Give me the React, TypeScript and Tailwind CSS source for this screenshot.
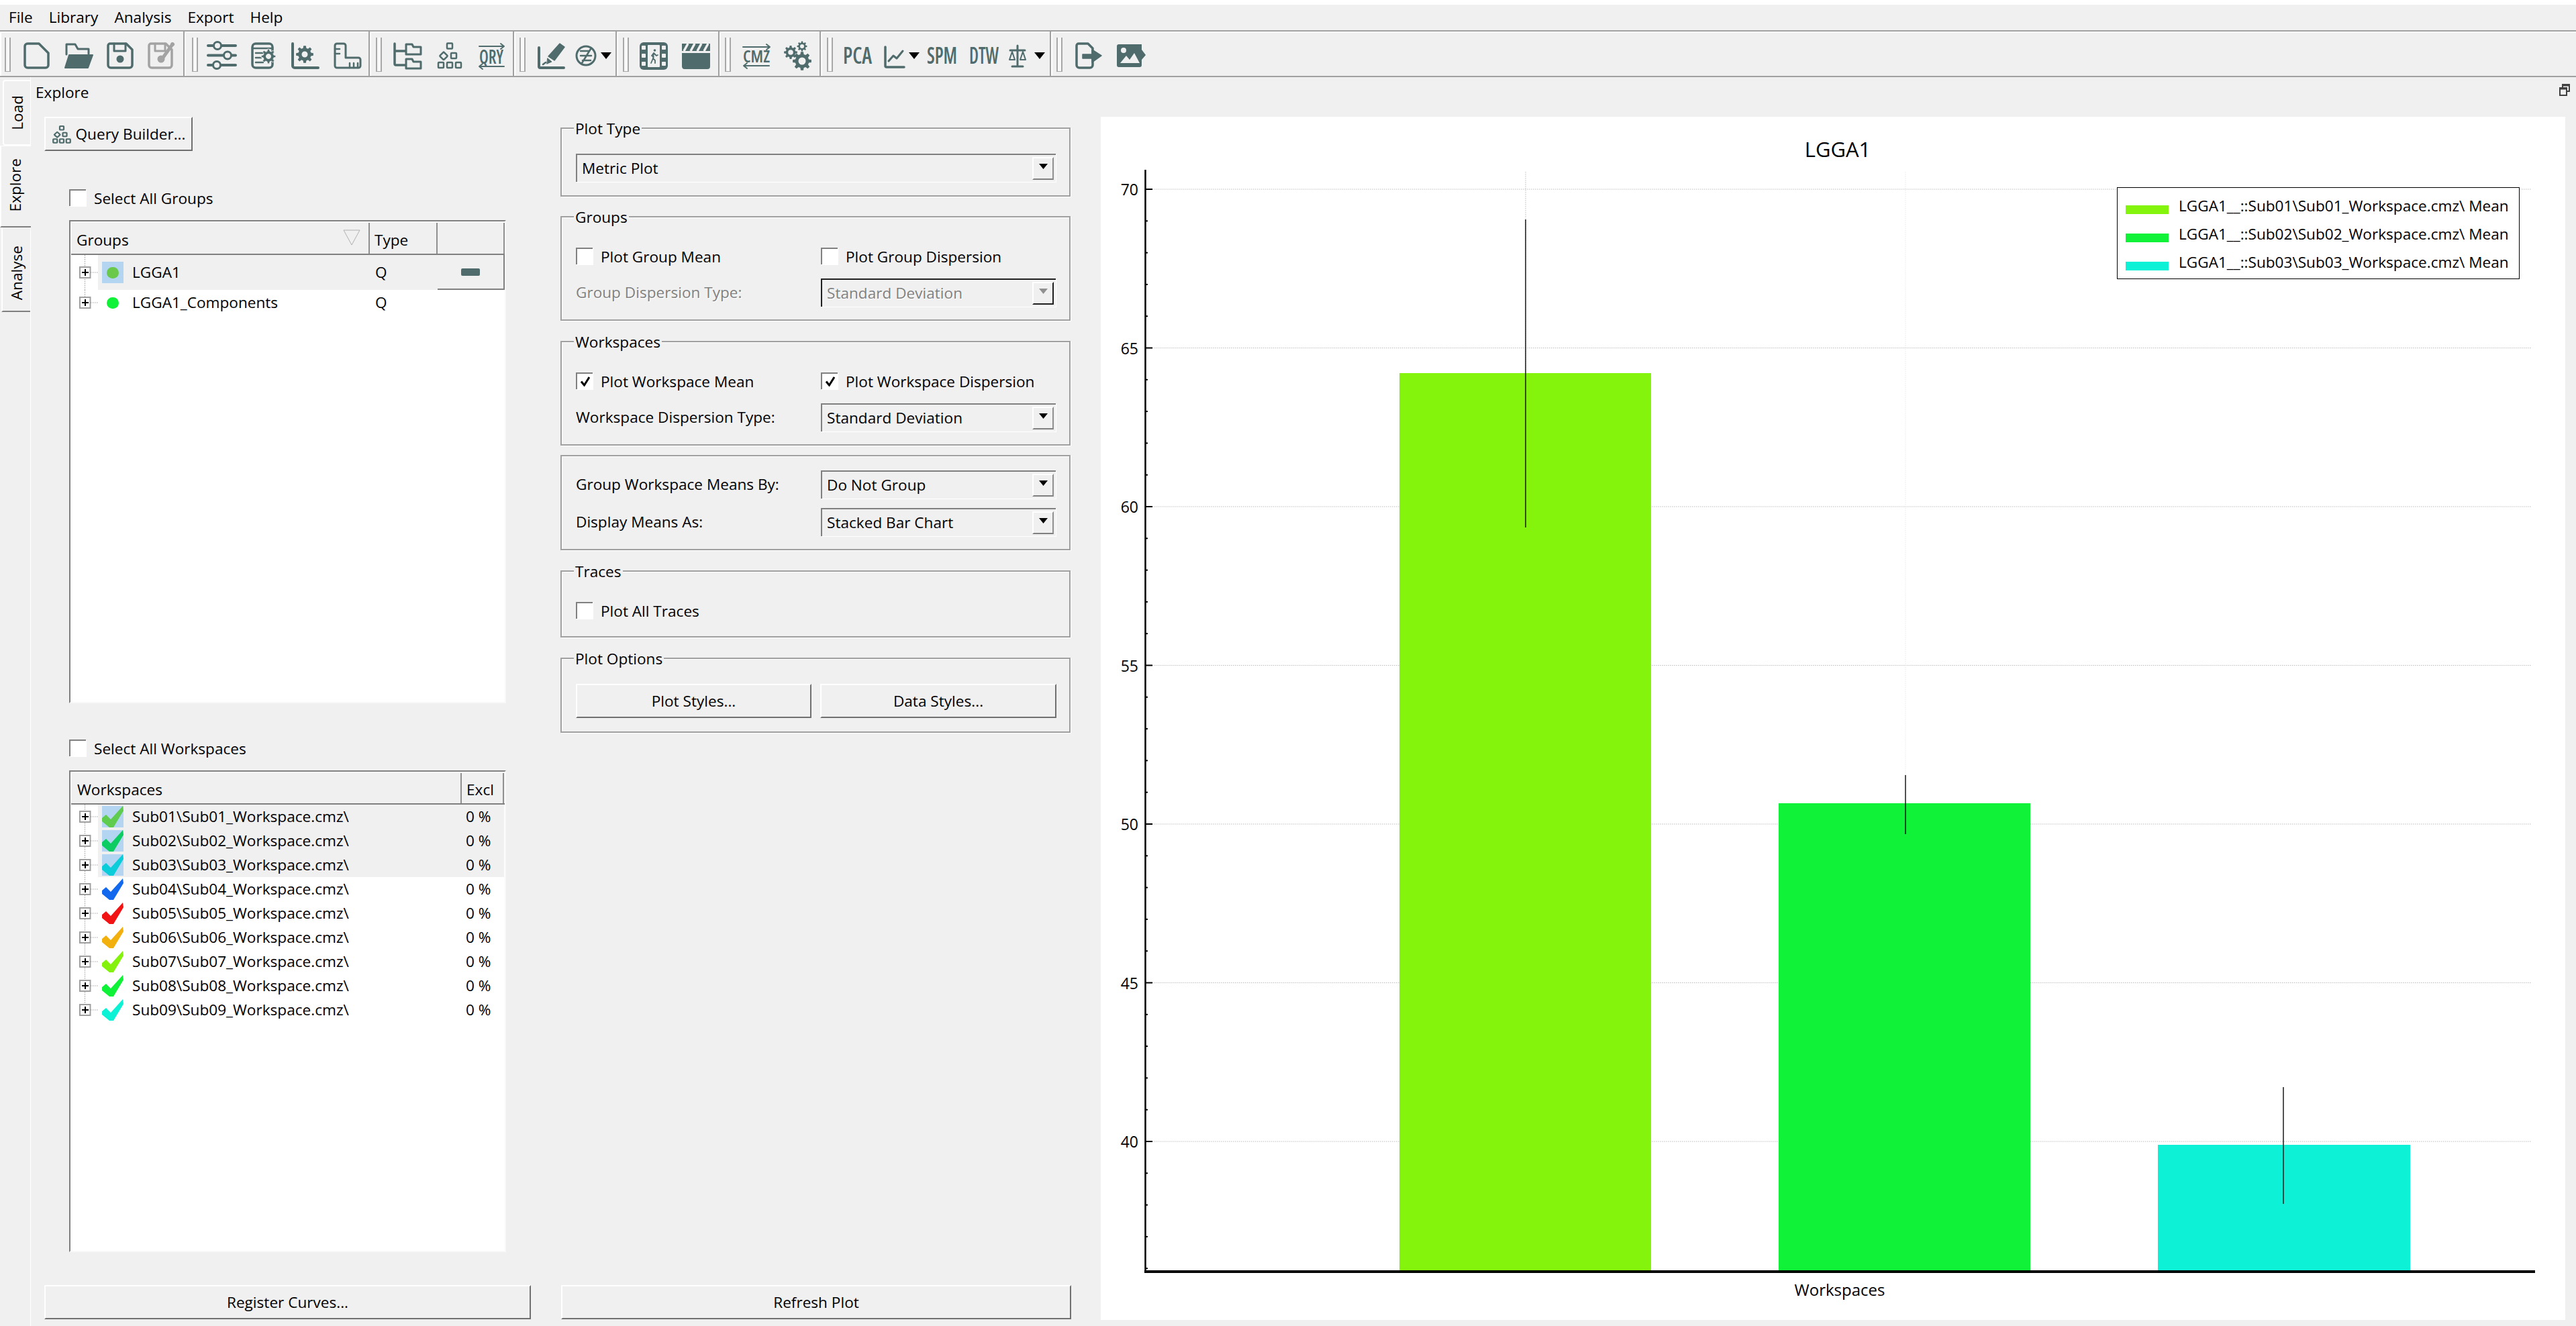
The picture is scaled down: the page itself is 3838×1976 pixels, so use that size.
import React from "react";

const TEAL = "#4f6b6c";

function gearPath(cx: number, cy: number, R: number, hole: number, teeth = 8) {
  const r = R * 0.74;
  const pts: string[] = [];
  const step = (Math.PI * 2) / teeth;
  for (let i = 0; i < teeth; i++) {
    const a = i * step - Math.PI / 2;
    const seq: [number, number][] = [
      [r, a - step * 0.32],
      [R, a - step * 0.18],
      [R, a + step * 0.18],
      [r, a + step * 0.32],
    ];
    for (const [rad, ang] of seq) pts.push(`${(cx + rad * Math.cos(ang)).toFixed(2)} ${(cy + rad * Math.sin(ang)).toFixed(2)}`);
  }
  const h = `M${cx - hole} ${cy}a${hole} ${hole} 0 1 0 ${hole * 2} 0a${hole} ${hole} 0 1 0 ${-hole * 2} 0z`;
  return `M${pts.join("L")}z${h}`;
}

function Ic({ className = "", w = 40, children }: { className?: string; w?: number; children: React.ReactNode }) {
  return (
    <svg
      width={w}
      height={40}
      viewBox={`0 0 ${w} 40`}
      fill="none"
      stroke={TEAL}
      strokeLinecap="round"
      strokeLinejoin="round"
      className={"flex-none overflow-visible mt-[6px] " + className}
    >
      {children}
    </svg>
  );
}

function Label({ t, w, className }: { t: string; w: number; className: string }) {
  return (
    <Ic className={className} w={w}>
      <text x="0" y="32" textLength={w} lengthAdjust="spacingAndGlyphs" fill={TEAL} stroke="none" className="text-[35px] font-semibold [font-stretch:75%]">
        {t}
      </text>
    </Ic>
  );
}

function Handle() {
  return <div className="flex-none w-[9px] h-[51px] mt-[3px] border-x-2 border-b border-[#a8a8a8] bg-[#f8f8f8]" />;
}

function DropArrow({ className = "" }: { className?: string }) {
  return (
    <svg width={16} height={10} viewBox="0 0 16 10" className={"flex-none mt-[6px] " + className}>
      <path d="M0 0H16L8 10z" fill="#000" />
    </svg>
  );
}

const qbShapes = (
  <>
    <rect x="16" y="1.5" width="8" height="8" rx="1" />
    <rect x="7" y="16" width="8.5" height="8.5" rx="1" transform="rotate(45 11 20)" />
    <rect x="22" y="16" width="8" height="8" rx="1" />
    <rect x="3" y="30" width="8" height="8" rx="1" />
    <rect x="16" y="30" width="8" height="8" rx="1" />
    <rect x="29" y="30" width="8" height="8" rx="1" />
  </>
);

function Toolbar() {
  return (
    <div className="flex-none h-[68px] flex border-b-2 border-[#a0a0a0]">
      <div className="flex-none w-[275px] pl-[7px] flex items-center border-r-2 border-[#a0a0a0] shadow-[inset_2px_2px_0_#fff]">
        <Handle />
        <Ic className="ml-[19px]">
          <path d="M6 2h17l14 14v18a4 4 0 0 1-4 4H6a4 4 0 0 1-4-4V6a4 4 0 0 1 4-4z" strokeWidth={3.5} />
        </Ic>
        <Ic className="ml-[23px]">
          <path d="M1 18V3h13l4 7h16v7" strokeWidth={3} />
          <path d="M-1 38L5 19H40L33 38z" fill={TEAL} strokeWidth={2} />
        </Ic>
        <Ic className="ml-[21px]">
          <path d="M5 2h24l9 9v23a4 4 0 0 1-4 4H6a4 4 0 0 1-4-4V5a3 3 0 0 1 3-3z" strokeWidth={3.5} />
          <path d="M11 2v11h17V2" strokeWidth={3} />
          <circle cx="20" cy="25" r="5.5" fill={TEAL} stroke="none" />
        </Ic>
        <Ic className="ml-[21px]">
          <g stroke="#a3a3a3">
            <path d="M5 2h22l9 9v23a4 4 0 0 1-4 4H6a4 4 0 0 1-4-4V5a3 3 0 0 1 3-3z" strokeWidth={3.5} />
            <path d="M11 2v11h15V2" strokeWidth={3} />
            <circle cx="20" cy="25" r="5.5" fill="#a3a3a3" stroke="none" />
            <path d="M37 3L22 24" strokeWidth={5} />
            <circle cx="37" cy="3" r="2.6" fill="#a3a3a3" />
          </g>
        </Ic>
      </div>

      <div className="flex-none w-[276px] pl-[11px] flex items-center border-r-2 border-[#a0a0a0] shadow-[inset_2px_2px_0_#fff]">
        <Handle />
        <Ic className="ml-[15px]">
          <path d="M0 5H41M0 19.5H41M0 34H41" strokeWidth={4} />
          <circle cx="14" cy="5" r="5.5" fill="#f0f0f0" strokeWidth={3} />
          <circle cx="29" cy="19.5" r="5.5" fill="#f0f0f0" strokeWidth={3} />
          <circle cx="13" cy="34" r="5.5" fill="#f0f0f0" strokeWidth={3} />
        </Ic>
        <Ic className="ml-[22px]">
          <rect x="4" y="2" width="30" height="36" rx="5" strokeWidth={3.5} />
          <path d="M4 9H34M9 16H20M9 23H17M9 30H20" strokeWidth={2.5} />
          <path d={gearPath(28, 21, 11, 3.5, 8)} fill={TEAL} fillRule="evenodd" stroke="#f0f0f0" strokeWidth={1} />
        </Ic>
        <Ic className="ml-[21px]">
          <path d="M3 2V35a3 3 0 0 0 3 3H41" strokeWidth={4} />
          <path d={gearPath(21, 18, 13, 4.5, 8)} fill={TEAL} fillRule="evenodd" stroke="none" />
        </Ic>
        <Ic className="ml-[24px]" w={42}>
          <path d="M5 2h10a3 3 0 0 1 3 3v18h19a3 3 0 0 1 3 3v9a3 3 0 0 1-3 3H5a3 3 0 0 1-3-3V5a3 3 0 0 1 3-3z" strokeWidth={3} />
          <path d="M2 10H9M2 17H9M24 38V31M30 38V31M36 38V31" strokeWidth={2.5} />
        </Ic>
      </div>

      <div className="flex-none w-[215px] pl-[9px] flex items-center border-r-2 border-[#a0a0a0] shadow-[inset_2px_2px_0_#fff]">
        <Handle />
        <Ic className="ml-[17px]" w={42}>
          <path d="M2 2V32a2 2 0 0 0 2 2H18M2 13H18" strokeWidth={3.5} />
          <path d="M19 3h9l2 4h11v11H19z" strokeWidth={3} />
          <path d="M19 25h9l2 4h11v10H19z" strokeWidth={3} />
        </Ic>
        <Ic className="ml-[22px]" w={40}>
          <g strokeWidth={2.5}>{qbShapes}</g>
        </Ic>
        <Ic className="ml-[21px]" w={42}>
          <path d="M3 6H40M35 2l5 4-5 4" strokeWidth={2} />
          <text x="3" y="32" textLength={36} lengthAdjust="spacingAndGlyphs" fill={TEAL} stroke="none" className="text-[29px] font-semibold [font-stretch:75%]">QRY</text>
          <path d="M40 36H3M8 32l-5 4 5 4" strokeWidth={2} />
        </Ic>
      </div>

      <div className="flex-none w-[153px] pl-[8px] flex items-center border-r-2 border-[#a0a0a0] shadow-[inset_2px_2px_0_#fff]">
        <Handle />
        <Ic className="ml-[18px]">
          <path d="M2 8V36a2 2 0 0 0 2 2H39" strokeWidth={4} />
          <path d="M33 2l7 5-15 20-9-6z" fill={TEAL} strokeWidth={1.5} />
          <path d="M15 24l6 5-7 3z" fill={TEAL} strokeWidth={1} />
          <path d="M8 33l4-3" strokeWidth={2.5} />
        </Ic>
        <Ic className="ml-[12px]">
          <circle cx="20" cy="20" r="14" strokeWidth={3} />
          <path d="M12 13H25M12 20H28M15 27H27M27 10L14 31" strokeWidth={2.5} />
        </Ic>
        <DropArrow className="ml-[2px]" />
      </div>

      <div className="flex-none w-[153px] pl-[9px] flex items-center border-r-2 border-[#a0a0a0] shadow-[inset_2px_2px_0_#fff]">
        <Handle />
        <Ic className="ml-[16px]" w={42}>
          <rect x="0" y="0" width="42" height="41" rx="6" fill={TEAL} stroke="none" />
          <rect x="12" y="4" width="18" height="33" rx="1" fill="#f0f0f0" stroke="none" />
          <g fill="#f0f0f0" stroke="none">
            <rect x="3" y="5" width="6" height="6" rx="1" />
            <rect x="3" y="17" width="6" height="6" rx="1" />
            <rect x="3" y="29" width="6" height="6" rx="1" />
            <rect x="33" y="5" width="6" height="6" rx="1" />
            <rect x="33" y="17" width="6" height="6" rx="1" />
            <rect x="33" y="29" width="6" height="6" rx="1" />
          </g>
          <circle cx="22.5" cy="12" r="1.8" fill={TEAL} stroke="none" />
          <path d="M21 16l-3 4 3 2M21 16l4 4 2-1M21 16l-1 8 3 3v4M20 24l-3 7" strokeWidth={1.8} />
        </Ic>
        <Ic className="ml-[21px]" w={42}>
          <path d="M0 13V2H42V13z" fill={TEAL} stroke="none" />
          <path d="M9 2L3 13M19 2L13 13M29 2L23 13M39 2L33 13" stroke="#f0f0f0" strokeWidth={3.5} strokeLinecap="butt" />
          <path d="M0 16H42V36a4 4 0 0 1-4 4H4a4 4 0 0 1-4-4z" fill={TEAL} stroke="none" />
        </Ic>
      </div>

      <div className="flex-none w-[151px] pl-[8px] flex items-center border-r-2 border-[#a0a0a0] shadow-[inset_2px_2px_0_#fff]">
        <Handle />
        <Ic className="ml-[17px]" w={42}>
          <path d="M1 7H41M36 3l5 4-5 4" strokeWidth={2} />
          <text x="1" y="30" textLength={40} lengthAdjust="spacingAndGlyphs" fill={TEAL} stroke="none" className="text-[25px] font-semibold [font-stretch:75%]">CMZ</text>
          <path d="M40 35H2M7 31l-5 4 5 4" strokeWidth={2} />
        </Ic>
        <Ic className="ml-[22px]">
          <path d={gearPath(25, 28, 14, 5.5, 8)} fill={TEAL} fillRule="evenodd" stroke="none" />
          <path d={gearPath(25, 6, 7.5, 3, 8)} fill={TEAL} fillRule="evenodd" stroke="none" />
          <path d={gearPath(8, 15, 10, 3.8, 8)} fill={TEAL} fillRule="evenodd" stroke="none" />
        </Ic>
      </div>

      <div className="flex-none w-[343px] pl-[9px] flex items-center border-r-2 border-[#a0a0a0] shadow-[inset_2px_2px_0_#fff]">
        <Handle />
        <Label t="PCA" w={43} className="ml-[15px]" />
        <Ic className="ml-[18px]" w={30}>
          <path d="M2 7V35a2 2 0 0 0 2 2H30" strokeWidth={3.5} />
          <path d="M7 28l7-8 5 4 9-11" strokeWidth={3} />
        </Ic>
        <DropArrow className="ml-[7px]" />
        <Label t="SPM" w={45} className="ml-[11px]" />
        <Label t="DTW" w={44} className="ml-[18px]" />
        <Ic className="ml-[15px]" w={26}>
          <path d="M13 5V34M5 36H21M2 12H24M13 5" strokeWidth={3} />
          <path d="M1 26l4-12 4 12zM17 26l4-12 4 12z" strokeWidth={2} />
        </Ic>
        <DropArrow className="ml-[12px]" />
      </div>

      <div className="flex-1 pl-[8px] flex items-center shadow-[inset_2px_2px_0_#fff]">
        <Handle />
        <Ic className="ml-[20px]">
          <path d="M25 24V34a4 4 0 0 1-4 4H5a4 4 0 0 1-4-4V5a3 3 0 0 1 3-3h14l7 7V16" strokeWidth={3.5} />
          <path d="M10 18H24V11L38 20 24 30V24H10z" fill={TEAL} strokeWidth={1.5} />
        </Ic>
        <Ic className="ml-[20px]" w={44}>
          <path d="M1 6a3 3 0 0 1 3-3H38v8L44 19 38 26V34a3 3 0 0 1-3 3H4a3 3 0 0 1-3-3z" fill={TEAL} stroke="none" />
          <circle cx="11" cy="12" r="4" fill="#f0f0f0" stroke="none" />
          <path d="M6 31L15 20 20 26 27 16 35 31z" fill="#f0f0f0" stroke="none" />
        </Ic>
      </div>
    </div>
  );
}

function Tab({ className, label }: { className: string; label: string }) {
  return (
    <div className={"flex-none flex items-center justify-center " + className}>
      <span className="[writing-mode:vertical-rl] rotate-180">{label}</span>
    </div>
  );
}

function Branch({ h, last }: { h: number; last?: boolean }) {
  const cy = h / 2;
  return (
    <svg width={40} height={h} viewBox={`0 0 40 ${h}`} className="flex-none">
      <path d={`M20.5 0V${last ? cy : h}M29 ${cy}H40`} stroke="#a0a0a0" strokeWidth={1} strokeDasharray="1.5 1.5" />
      <rect x="13" y={cy - 8} width="15.5" height="16" fill="#fff" stroke="#a0a0a0" strokeWidth={2} />
      <path d={`M16 ${cy}H26M21 ${cy - 5}V${cy + 5}`} stroke="#000" strokeWidth={2} />
    </svg>
  );
}

function CheckBox({ checked, className = "" }: { checked?: boolean; className?: string }) {
  return (
    <span className={"flex-none flex items-center justify-center w-[25px] h-[25px] bg-white border-t-2 border-l-2 border-[#808080] shadow-[1px_1px_0_#fff] " + className}>
      {checked && (
        <svg width={14} height={15} viewBox="0 0 14 15">
          <path d="M1 7.5L5.5 13 13 1" fill="none" stroke="#000" strokeWidth={3} />
        </svg>
      )}
    </span>
  );
}

function Check({ label, checked, className = "" }: { label: string; checked?: boolean; className?: string }) {
  return (
    <div className={"flex items-start h-[25px] " + className}>
      <CheckBox checked={checked} />
      <span className="ml-[12px] mt-[-2px] whitespace-nowrap">{label}</span>
    </div>
  );
}

function Combo({ value, disabled, className = "" }: { value: string; disabled?: boolean; className?: string }) {
  return (
    <div
      className={
        "flex-none h-[42px] flex items-center justify-between pl-[7px] pr-[3px] border-t-2 border-l-2 shadow-[1px_1px_0_#fff] " +
        (disabled ? "border-[#202020] text-[#808080] [text-shadow:1px_1px_0_#fff] " : "border-[#808080] ") +
        className
      }
    >
      <span className="whitespace-nowrap">{value}</span>
      <span
        className={
          "flex-none flex items-center justify-center w-[32px] h-[34px] mb-[1px] border-t-2 border-l-2 border-r-2 border-b-2 border-t-white border-l-white " +
          (disabled ? "border-r-[#202020] border-b-[#202020]" : "border-r-[#909090] border-b-[#808080]")
        }
      >
        <svg width={13} height={8} viewBox="0 0 13 8" className="mb-[6px]">
          <path d="M0 0H13L6.5 8z" fill={disabled ? "#909090" : "#000"} />
        </svg>
      </span>
    </div>
  );
}

function Button({ className, children }: { className: string; children: React.ReactNode }) {
  return (
    <button className={"flex-none flex items-center justify-center h-[51px] bg-[#f0f0f0] border-t-2 border-l-2 border-b-2 border-r-2 border-t-white border-l-white border-r-[#707070] border-b-[#707070] whitespace-nowrap " + className}>
      {children}
    </button>
  );
}

function Box({ title, className, children }: { title?: string; className: string; children: React.ReactNode }) {
  return (
    <section className={"relative flex-none w-[760px] border-2 border-[#a0a0a0] shadow-[1px_1px_0_#fff,inset_1px_1px_0_#fff] " + className}>
      {title && <h3 className="absolute left-[18px] top-[-16px] px-[2px] bg-[#f0f0f0] font-normal">{title}</h3>}
      {children}
    </section>
  );
}

const tickNums = [36, 37, 38, 39, 40, 41, 42, 43, 44, 45, 46, 47, 48, 49, 50, 51, 52, 53, 54, 55, 56, 57, 58, 59, 60, 61, 62, 63, 64, 65, 66, 67, 68, 69, 70];
const yOf = (v: number) => 1701 + (40 - v) * 47.3;

function Chart() {
  return (
    <div className="relative flex-none w-[2182px] h-[1793px] bg-white">
      <svg viewBox="1640 174 2182 1793" className="block w-full h-full">
        {[70, 65, 60, 55, 50, 45, 40].map((v) => (
          <path key={v} d={`M1717 ${yOf(v)}H3772`} stroke="#bdbdbd" strokeDasharray="1.5 1.5" />
        ))}
        <path d="M2273 256V1895" stroke="#bdbdbd" strokeDasharray="1.5 1.5" />
        <path d="M2839 256V1895" stroke="#e8e8e8" strokeDasharray="1.5 1.5" />
        <rect x="2085" y="556" width="375" height="1338" fill="#85f40d" />
        <rect x="2650" y="1197" width="375" height="697" fill="#10f237" />
        <rect x="3215" y="1706" width="376" height="188" fill="#0df2d6" />
        <path d="M2273 327V786M2839 1155V1243M3402 1620V1794" stroke="#1a1a1a" strokeWidth={1.5} />
        {tickNums.map((v) => (
          <path key={v} d={`M1706 ${yOf(v)}H${v % 5 === 0 ? 1717 : 1710}`} stroke="#000" strokeWidth={2} />
        ))}
        <path d="M1706.5 253V1895" stroke="#000" strokeWidth={2.5} />
        <path d="M1705 1895H3777" stroke="#000" strokeWidth={4} />
        {[70, 65, 60, 55, 50, 45, 40].map((v) => (
          <text key={v} x="1696" y={yOf(v) + 9} textAnchor="end" className="text-[23px]">{v}</text>
        ))}
        <text x="2738" y="234" textAnchor="middle" className="text-[31px]">LGGA1</text>
        <text x="2741" y="1931" textAnchor="middle" className="text-[24px]">Workspaces</text>
      </svg>
      <div className="absolute left-[1514px] top-[105px] w-[600px] h-[137px] bg-white border border-black pt-[6px] pl-[12px] flex flex-col">
        {[
          ["LGGA1__::Sub01\\Sub01_Workspace.cmz\\ Mean", "bg-[#85f40d]"],
          ["LGGA1__::Sub02\\Sub02_Workspace.cmz\\ Mean", "bg-[#10f237]"],
          ["LGGA1__::Sub03\\Sub03_Workspace.cmz\\ Mean", "bg-[#0df2d6]"],
        ].map(([t, c]) => (
          <div key={t} className="flex h-[42px] items-center">
            <span className={"flex-none w-[64px] h-[13px] mt-[11px] " + c} />
            <span className="ml-[15px] whitespace-nowrap">{t}</span>
          </div>
        ))}
      </div>
    </div>
  );
}

const workspaces: [string, string][] = [
  ["Sub01", "#5fcc4f"],
  ["Sub02", "#0ccc62"],
  ["Sub03", "#0acdd9"],
  ["Sub04", "#1269ee"],
  ["Sub05", "#f21414"],
  ["Sub06", "#f2b00f"],
  ["Sub07", "#85f20d"],
  ["Sub08", "#10f237"],
  ["Sub09", "#0df2d4"],
];

export default function App() {
  return (
    <div className="w-[3838px] h-[1976px] flex flex-col overflow-hidden bg-[#f0f0f0] text-black text-[22.6px] leading-[32px] font-['Open_Sans',sans-serif]">
      <div className="flex-none h-[7px] bg-white" />
      <nav className="flex-none h-[40px] flex items-center gap-[24px] pl-[13px] border-b-2 border-[#a0a0a0]">
        <span>File</span>
        <span>Library</span>
        <span>Analysis</span>
        <span>Export</span>
        <span>Help</span>
      </nav>
      <Toolbar />

      <div className="flex-1 flex min-h-0">
        <aside className="flex-none w-[45px] flex flex-col pt-[4px]">
          <Tab label="Load" className="ml-[4px] w-[41px] h-[98px] border-t-2 border-l-2 border-b-2 border-white rounded-tl-[4px] rounded-bl-[4px]" />
          <Tab label="Explore" className="relative z-10 w-[46px] h-[122px] -mr-[1px] pr-[2px] pb-[4px] border-t border-l-2 border-b-2 border-t-white border-l-white border-b-[#808080] bg-[#f0f0f0]" />
          <div className="flex-none pl-[2px] flex">
            <Tab label="Analyse" className="w-[43px] h-[126px] pt-[12px] border-l-2 border-white border-b-2 border-b-[#808080]" />
          </div>
        </aside>

        <main className="flex-1 min-w-0 flex flex-col border-l border-white">
          <header className="flex-none h-[59px] flex justify-between pl-[7px] pr-[9px] pt-[7px]">
            <span>Explore</span>
            <svg width={16} height={18} viewBox="0 0 16 18" className="mt-[3px]">
              <rect x="5" y="1" width="10" height="10" fill="none" stroke="#404040" strokeWidth={2} />
              <rect x="1" y="6" width="10" height="11" fill="#f0f0f0" stroke="#404040" strokeWidth={2} />
              <path d="M5 2H15M1 7H11" stroke="#404040" strokeWidth={3} />
            </svg>
          </header>

          <div className="flex-1 min-h-0 flex pl-[20px]">
            <div className="flex-none w-[725px] flex flex-col">
              <Button className="w-[221px]">
                <svg width={30} height={27} viewBox="0 0 40 40" preserveAspectRatio="none" fill="none" stroke={TEAL} strokeWidth={3} className="mr-[6px] mt-[2px]">
                  {qbShapes}
                </svg>
                <span>Query Builder...</span>
              </Button>

              <Check label="Select All Groups" className="ml-[37px] mt-[57px]" />

              <div className="flex-none ml-[37px] mt-[21px] w-[651px] h-[720px] pl-[1px] pt-[2px] bg-white border-2 border-t-[#808080] border-l-[#808080] border-r-[#f8f8f8] border-b-[#f8f8f8] flex flex-col">
                <div className="flex-none h-[48px] flex bg-[#f0f0f0] border-b-2 border-[#808080]">
                  <div className="flex-none w-[445px] flex justify-between pl-[8px] pr-[12px] pt-[10px] border-r-2 border-[#909090]">
                    <span>Groups</span>
                    <svg width={26} height={24} viewBox="0 0 26 24">
                      <path d="M1 1H25L13 23z" fill="none" stroke="#b0b0b0" strokeWidth={1} />
                    </svg>
                  </div>
                  <div className="flex-none w-[101px] pl-[7px] pt-[10px] border-r-2 border-[#909090]">Type</div>
                  <div className="flex-none w-[100px] border-r-2 border-[#909090]" />
                </div>
                <div className="flex-none h-[52px] flex">
                  <Branch h={52} />
                  <div className="flex-none w-[506px] pl-[6px] flex items-center bg-[#f0f0f0]">
                    <span className="flex-none w-[32px] h-[32px] bg-[#b3d5f2] flex items-center justify-center">
                      <span className="w-[18px] h-[17px] rounded-full bg-[#6ac94b]" />
                    </span>
                    <span className="flex-none ml-[13px] w-[354px]">LGGA1</span>
                    <span className="pl-[8px]">Q</span>
                  </div>
                  <div className="flex-none w-[100px] flex items-center justify-center bg-[#f0f0f0] border-b-2 border-r-2 border-[#808080]">
                    <span className="w-[28px] h-[11px] rounded-[2px] bg-[#4f6b6c]" />
                  </div>
                </div>
                <div className="flex-none h-[38px] flex">
                  <Branch h={38} last />
                  <div className="flex-none w-[506px] pl-[6px] flex items-center">
                    <span className="flex-none w-[32px] flex justify-center">
                      <span className="w-[18px] h-[17px] rounded-full bg-[#10f237]" />
                    </span>
                    <span className="flex-none ml-[13px] w-[354px]">LGGA1_Components</span>
                    <span className="pl-[8px]">Q</span>
                  </div>
                </div>
              </div>

              <Check label="Select All Workspaces" className="ml-[37px] mt-[54px]" />

              <div className="flex-none ml-[37px] mt-[21px] w-[651px] h-[718px] pl-[1px] pt-[2px] bg-white border-2 border-t-[#808080] border-l-[#808080] border-r-[#f8f8f8] border-b-[#f8f8f8] flex flex-col">
                <div className="flex-none h-[47px] flex bg-[#f0f0f0] border-b-2 border-[#808080]">
                  <div className="flex-none w-[582px] pl-[9px] pt-[9px] border-r-2 border-[#909090]">Workspaces</div>
                  <div className="flex-none w-[63px] pl-[7px] pt-[9px] border-r-2 border-[#909090]">Excl</div>
                </div>
                {workspaces.map(([s, c], i) => (
                  <div key={s} className="flex-none h-[36px] flex">
                    <Branch h={36} last={i === workspaces.length - 1} />
                    <div className={"flex-none w-[605px] pl-[6px] flex items-center " + (i < 3 ? "bg-[#f0f0f0]" : "")}>
                      <span className={"flex-none w-[32px] h-[32px] " + (i < 3 ? "bg-[#b3d5f2]" : "")}>
                        <svg width={32} height={32} viewBox="0 0 32 32" className="block">
                          <path d="M31 0L32 7L17 32H11L0 23V18L6 13L13 20z" fill={c} />
                        </svg>
                      </span>
                      <span className="flex-none ml-[13px] w-[491px]">{s}\{s}_Workspace.cmz\</span>
                      <span className="whitespace-nowrap pl-[6px]">0 %</span>
                    </div>
                  </div>
                ))}
              </div>

              <Button className="mt-[49px] w-[725px]">Register Curves...</Button>
            </div>

            <div className="flex-none w-[761px] ml-[44px] flex flex-col">
              <Box title="Plot Type" className="mt-[16px] h-[103px] pl-[21px] pt-[37px]">
                <Combo value="Metric Plot" className="w-[715px]" />
              </Box>

              <Box title="Groups" className="mt-[29px] h-[156px] pl-[21px] pt-[45px]">
                <div className="grid grid-cols-[365px_350px]">
                  <Check label="Plot Group Mean" />
                  <Check label="Plot Group Dispersion" />
                  <div className="mt-[21px] flex items-center text-[#808080] [text-shadow:1px_1px_0_#fff]">Group Dispersion Type:</div>
                  <Combo value="Standard Deviation" disabled className="mt-[21px]" />
                </div>
              </Box>

              <Box title="Workspaces" className="mt-[30px] h-[156px] pl-[21px] pt-[45px]">
                <div className="grid grid-cols-[365px_350px]">
                  <Check label="Plot Workspace Mean" checked />
                  <Check label="Plot Workspace Dispersion" checked />
                  <div className="mt-[21px] flex items-center">Workspace Dispersion Type:</div>
                  <Combo value="Standard Deviation" className="mt-[21px]" />
                </div>
              </Box>

              <Box className="mt-[14px] h-[142px] pl-[21px] pt-[21px]">
                <div className="grid grid-cols-[365px_350px] gap-y-[14px]">
                  <div className="flex items-center">Group Workspace Means By:</div>
                  <Combo value="Do Not Group" />
                  <div className="flex items-center">Display Means As:</div>
                  <Combo value="Stacked Bar Chart" />
                </div>
              </Box>

              <Box title="Traces" className="mt-[30px] h-[100px] pl-[21px] pt-[45px]">
                <Check label="Plot All Traces" />
              </Box>

              <Box title="Plot Options" className="mt-[30px] h-[112px] pl-[21px] pt-[37px]">
                <div className="flex gap-[13px]">
                  <Button className="w-[351px]">Plot Styles...</Button>
                  <Button className="w-[352px]">Data Styles...</Button>
                </div>
              </Box>

              <div className="flex-1" />
              <Button className="mb-[10px] ml-[1px] w-[760px]">Refresh Plot</Button>
            </div>

            <div className="flex-none ml-[44px]">
              <Chart />
            </div>
          </div>
        </main>
      </div>
    </div>
  );
}
